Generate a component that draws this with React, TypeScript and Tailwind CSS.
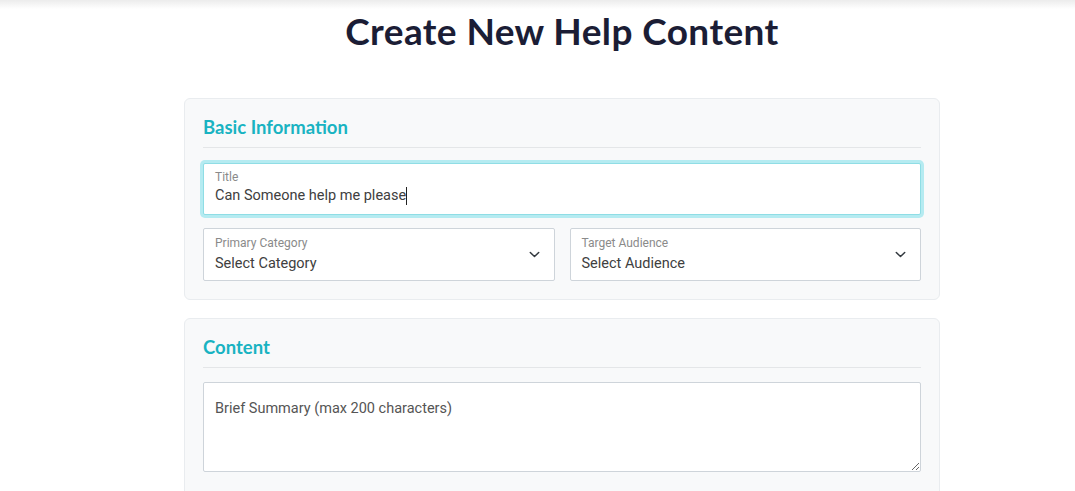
import React from "react";

function Chevron() {
  return (
    <svg width="11" height="7" viewBox="0 0 11 7" fill="none" className="shrink-0">
      <path d="M1.3 1.5 L5.5 5.5 L9.7 1.5" stroke="#343a40" strokeWidth="1.5" strokeLinecap="round" strokeLinejoin="round" />
    </svg>
  );
}

function SelectBox({ label, value }: { label: string; value: string }) {
  return (
    <div className="flex-1 h-[53px] bg-white border border-[#ced4da] rounded-[2px] flex items-center pl-[11px] pr-[14px]">
      <div className="flex-1 flex flex-col">
        <span className="text-[12px] leading-[14px] text-[#8a8a8a]">{label}</span>
        <span className="text-[14.5px] leading-[18px] mt-[5px] text-[#404040]">{value}</span>
      </div>
      <Chevron />
    </div>
  );
}

export default function App() {
  return (
    <div className="h-[491px] overflow-hidden bg-white relative" style={{ fontFamily: "Roboto, 'Liberation Sans', sans-serif" }}>
      <div className="absolute top-0 left-0 right-0 h-[9px] bg-gradient-to-b from-[#ececec] to-white" />
      <div className="relative w-[756px] ml-[184px] pt-[9px]">
        <h1
          className="text-center text-[37px] leading-[44px] font-bold text-[#1b1d35] tracking-[0.4px]"
          style={{ fontFamily: "Lato, 'Open Sans', sans-serif" }}
        >
          Create New Help Content
        </h1>

        <section className="mt-[45px] bg-[#f8f9fa] border border-[#e9ecef] rounded-[6px] px-[18px] pt-[17px] pb-[18px]">
          <h2
            className="text-[18.5px] leading-[22px] font-bold text-[#19b3c2] pb-[9px] border-b border-[#e4e6e8]"
            style={{ fontFamily: "Lato, 'Open Sans', sans-serif" }}
          >
            Basic Information
          </h2>
          <div className="mt-[15px] h-[52px] bg-white border border-[#8fdde5] rounded-[2px] shadow-[0_0_0_3px_#b5ebf1] flex flex-col pt-[6px] pl-[11px]">
            <span className="text-[12px] leading-[14px] text-[#8a8a8a]">Title</span>
            <span className="text-[14.5px] leading-[18px] mt-[3px] text-[#404040] flex items-center">
              Can Someone help me please
              <span className="inline-block w-px h-[18px] bg-[#222]" />
            </span>
          </div>
          <div className="mt-[13px] flex gap-[15px]">
            <SelectBox label="Primary Category" value="Select Category" />
            <SelectBox label="Target Audience" value="Select Audience" />
          </div>
        </section>

        <section className="mt-[18px] bg-[#f8f9fa] border border-[#e9ecef] rounded-[6px] px-[18px] pt-[17px] pb-[40px]">
          <h2
            className="text-[18.5px] leading-[22px] font-bold text-[#19b3c2] pb-[9px] border-b border-[#e4e6e8]"
            style={{ fontFamily: "Lato, 'Open Sans', sans-serif" }}
          >
            Content
          </h2>
          <textarea
            readOnly
            placeholder="Brief Summary (max 200 characters)"
            className="block mt-[14px] w-full h-[90px] bg-white border border-[#ced4da] rounded-[2px] px-[11px] pt-[17px] text-[14.5px] leading-[18px] placeholder:text-[#555] outline-none"
          />
        </section>
      </div>
    </div>
  );
}
